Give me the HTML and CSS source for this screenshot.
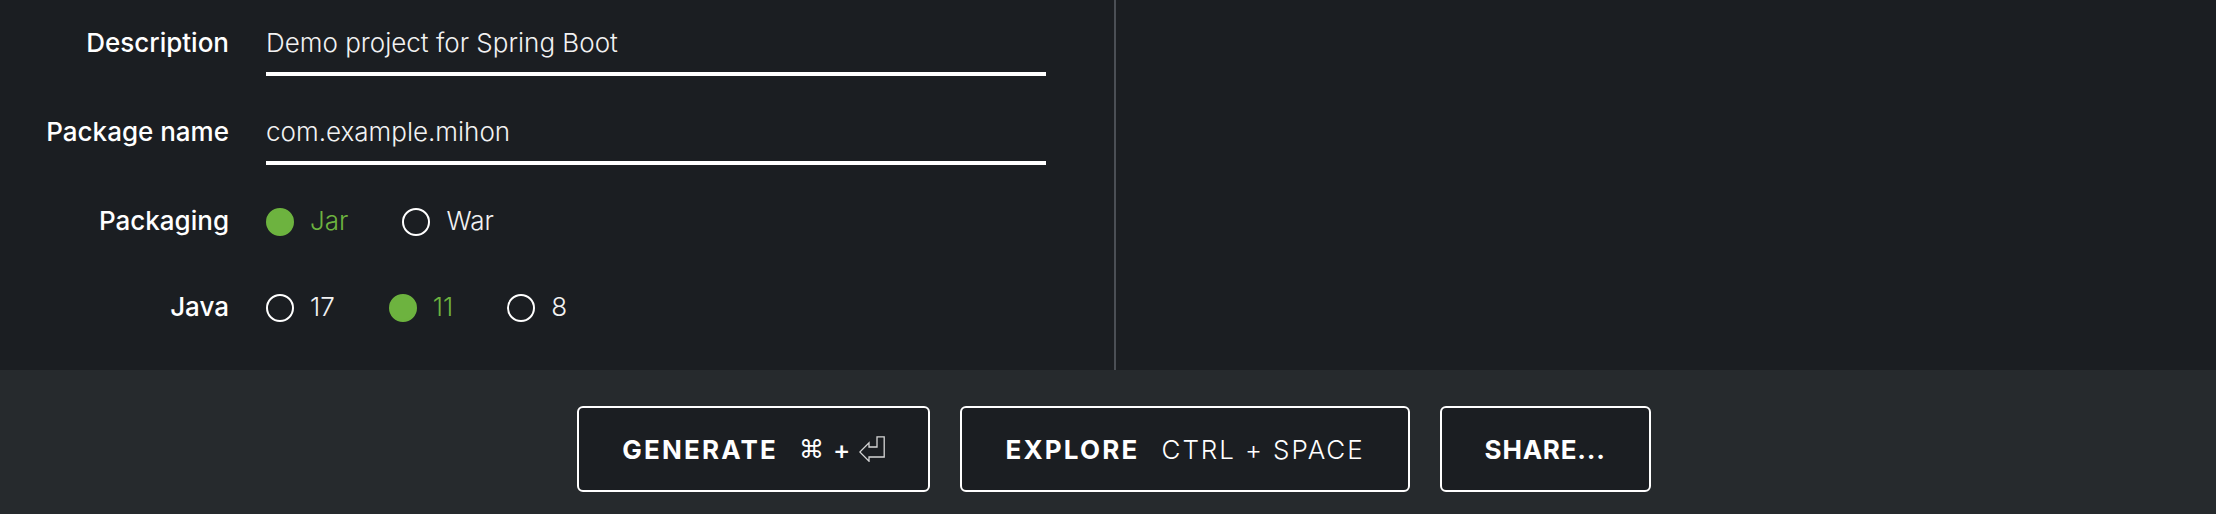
FILE: index.html
```html
<!DOCTYPE html>
<html lang="en">
<head>
<meta charset="utf-8">
<title>Spring Initializr</title>
<link rel="stylesheet" href="styles.css">
</head>
<body>
<div class="page">
  <main class="main">
    <section class="left">
      <div class="row">
        <div class="label">Description</div>
        <div class="control field">Demo project for Spring Boot</div>
      </div>
      <div class="row">
        <div class="label">Package name</div>
        <div class="control field">com.example.mihon</div>
      </div>
      <div class="row">
        <div class="label">Packaging</div>
        <div class="control radios">
          <span class="radio checked"><span class="dot"></span>Jar</span>
          <span class="radio"><span class="dot"></span>War</span>
        </div>
      </div>
      <div class="row">
        <div class="label">Java</div>
        <div class="control radios">
          <span class="radio"><span class="dot"></span>17</span>
          <span class="radio checked"><span class="dot"></span>11</span>
          <span class="radio"><span class="dot"></span>8</span>
        </div>
      </div>
    </section>
    <section class="right"></section>
  </main>
  <footer class="footer">
    <button class="btn"><span class="strong">GENERATE</span><span class="keys"><span class="cmd">⌘</span><span class="plus">+</span><svg class="enter" width="26" height="26" viewBox="0 0 26 26"><path d="M18 0.8 H25.2 V21 H10 V25.2 L0.8 16 L10 6.8 V11 H18 Z" fill="none" stroke="#d6d6d6" stroke-width="1.3" stroke-linejoin="miter"/></svg></span></button>
    <button class="btn"><span class="strong">EXPLORE</span><span class="keys light">CTRL + SPACE</span></button>
    <button class="btn"><span class="strong share">SHARE...</span></button>
  </footer>
</div>
</body>
</html>
```
FILE: styles.css
```css
html, body {
  margin: 0;
  padding: 0;
}
body {
  background: #1b1e22;
  color: #ffffff;
  font-family: Inter, "Noto Sans", "DejaVu Sans", sans-serif;
  font-size: 26px;
}
.page {
  display: flex;
  flex-direction: column;
  width: 2216px;
  height: 514px;
}
.main {
  display: flex;
  height: 370px;
  background: #1b1e22;
}
.left {
  width: 1114px;
  border-right: 2px solid #4b4f55;
  display: flex;
  flex-direction: column;
  gap: 38px;
  padding-top: 25px;
  box-sizing: content-box;
}
.right {
  flex: 1;
}
.row {
  display: grid;
  grid-template-columns: 229px 780px;
  column-gap: 37px;
  align-items: start;
}
.label {
  text-align: right;
  font-weight: 500;
  line-height: 36px;
  color: #ffffff;
}
.control {
  line-height: 36px;
  padding-bottom: 12px;
}
.field {
  font-weight: 300;
  color: #f2f2f2;
  border-bottom: 4px solid #ffffff;
  padding-bottom: 11px;
}
.radios {
  display: flex;
  align-items: center;
  height: 36px;
  font-weight: 300;
}
.radio {
  display: flex;
  align-items: center;
  margin-right: 54px;
  color: #f2f2f2;
}
.dot {
  width: 24px;
  height: 24px;
  border: 2px solid #ffffff;
  border-radius: 50%;
  margin-right: 16px;
  margin-top: 2px;
}
.radio.checked {
  color: #6db33f;
}
.radio.checked .dot {
  background: #6db33f;
  border-color: #6db33f;
}
.footer {
  flex: 1;
  background: #262a2d;
  display: flex;
  justify-content: center;
  align-items: flex-start;
  gap: 30px;
  padding: 36px 0 0 12px;
}
.btn {
  display: flex;
  align-items: center;
  height: 86px;
  padding: 0 43px;
  background: #1b1e22;
  border: 2px solid #ffffff;
  border-radius: 6px;
  color: #ffffff;
  font-family: Inter, "Noto Sans", "DejaVu Sans", sans-serif;
  font-size: 26px;
}
.strong {
  font-weight: 700;
  letter-spacing: 2.2px;
}
.strong.share {
  letter-spacing: 0.8px;
}
.keys {
  display: flex;
  align-items: center;
  margin-left: 21px;
  font-weight: 400;
}
.keys.light {
  font-weight: 300;
  letter-spacing: 1.9px;
  margin-left: 22px;
}
.cmd {
  font-family: "DejaVu Sans", sans-serif;
  font-size: 25px;
}
.plus {
  margin: 0 9px;
  font-weight: 500;
}
.enter {
  display: block;
}
```
